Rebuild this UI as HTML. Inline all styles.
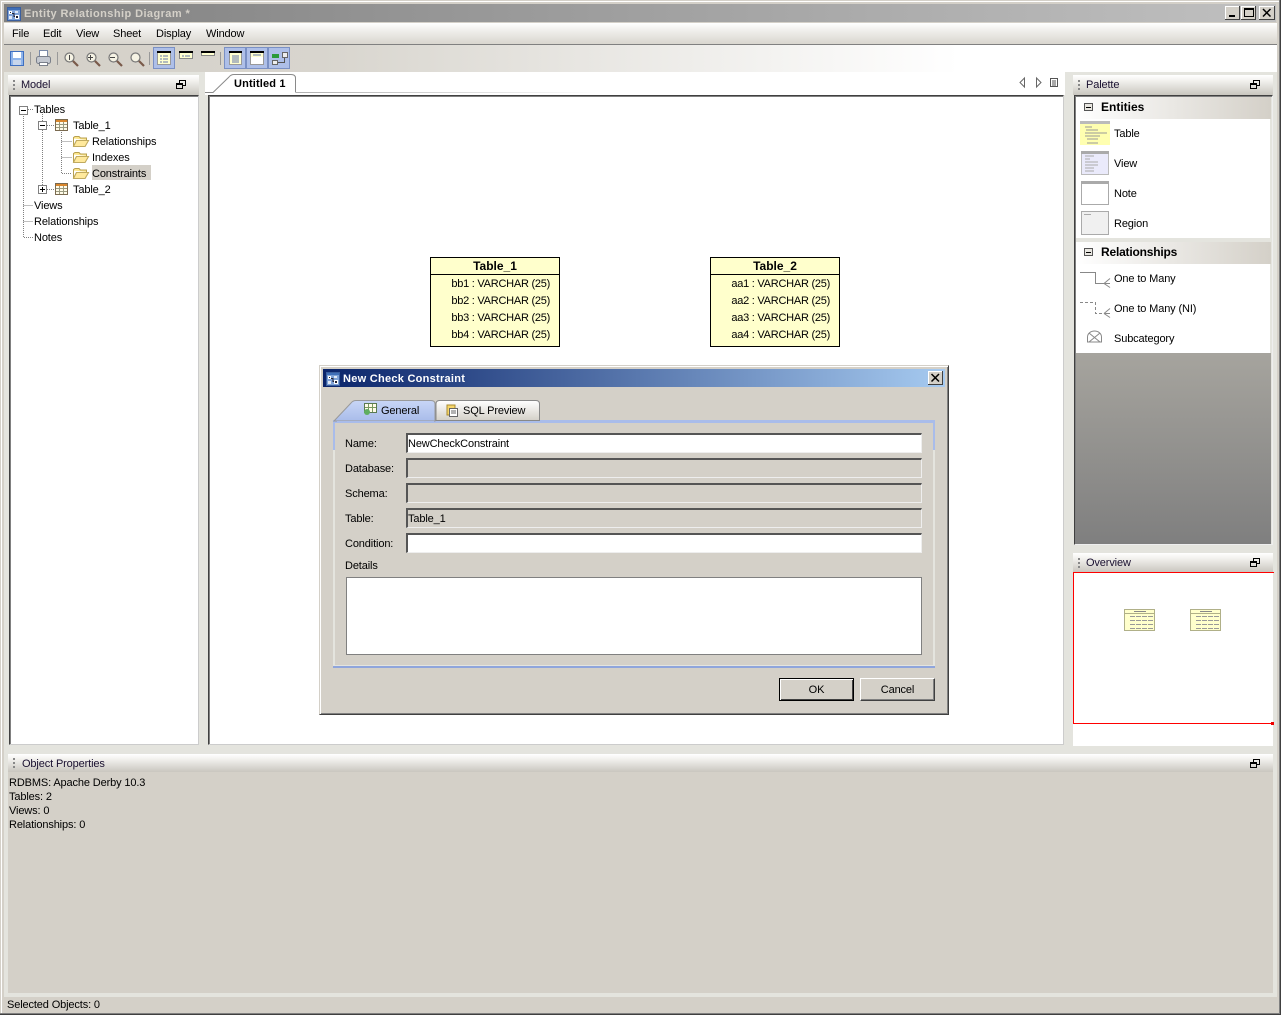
<!DOCTYPE html>
<html><head><meta charset="utf-8"><title>Entity Relationship Diagram</title>
<style>
html,body{margin:0;padding:0}
body{width:1281px;height:1015px;overflow:hidden;background:#d4d0c8;position:relative;font:11px/16px "Liberation Sans",sans-serif;color:#000;letter-spacing:-.13px}
div,span{position:absolute;white-space:nowrap;box-sizing:border-box}
.h{background:linear-gradient(#fff,#f4f3f0 25%,#c9c6bf)}
.in{border-top:2px solid #555;border-left:2px solid #555;border-right:1px solid #eee;border-bottom:1px solid #eee;background:#d4d0c8}
.b{font-weight:bold;letter-spacing:0}
.r{width:128px;text-align:right;letter-spacing:-.25px}
.box{background:#fff;border:1px solid;border-color:#404040 #ccc #ccc #404040;box-shadow:inset 1px 1px 0 #808080}
</style></head><body>
<!-- window frame -->
<div style="left:1px;top:1px;width:1278px;height:1px;background:#fff"></div>
<div style="left:1px;top:1px;width:1px;height:1012px;background:#fff"></div>
<div style="left:1279px;top:0;width:1px;height:1014px;background:#808080"></div>
<div style="left:1280px;top:0;width:1px;height:1015px;background:#404040"></div>
<div style="left:0;top:1013px;width:1280px;height:1px;background:#808080"></div>
<div style="left:0;top:1014px;width:1281px;height:1px;background:#404040"></div>
<!-- title -->
<div style="left:4px;top:4px;width:1272px;height:18px;background:linear-gradient(90deg,#808080,#c0c0c0)"></div>
<span class="b" style="left:24px;top:6px;color:#d4d0c8;letter-spacing:.42px">Entity Relationship Diagram *</span>
<div style="left:4px;top:23px;width:1273px;height:21px;background:linear-gradient(#fff,#f2f1ee 30%,#d9d6cf)"></div>
<div style="left:4px;top:44px;width:1273px;height:1px;background:#808080"></div>
<span style="left:12px;top:26px">File</span><span style="left:43px;top:26px">Edit</span><span style="left:76px;top:26px">View</span><span style="left:113px;top:26px">Sheet</span><span style="left:156px;top:26px">Display</span><span style="left:206px;top:26px">Window</span>
<div style="left:4px;top:45px;width:1273px;height:27px;background:linear-gradient(90deg,#d4d0c8,#d8d5ce 25%,#fff 75%)"></div>
<!-- main bg -->
<div style="left:4px;top:72px;width:1273px;height:925px;background:#e4e4de"></div>
<!-- model -->
<div class="h" style="left:8px;top:75px;width:191px;height:20px"></div>
<span style="left:21px;top:77px;color:#1a1030">Model</span>
<div class="box" style="left:9px;top:95px;width:190px;height:650px"></div>
<div style="left:92px;top:165px;width:59px;height:15px;background:#d4d0c8"></div>
<span style="left:34px;top:102px">Tables</span><span style="left:73px;top:118px">Table_1</span><span style="left:92px;top:134px">Relationships</span><span style="left:92px;top:150px">Indexes</span><span style="left:92px;top:166px">Constraints</span><span style="left:73px;top:182px">Table_2</span><span style="left:34px;top:198px">Views</span><span style="left:34px;top:214px">Relationships</span><span style="left:34px;top:230px">Notes</span>
<!-- editor -->
<div style="left:205px;top:72px;width:860px;height:23px;background:#fff"></div>
<div class="box" style="left:208px;top:95px;width:856px;height:650px"></div>
<!-- diagram tables -->
<div style="left:430px;top:257px;width:130px;height:90px;background:#ffc;border:1px solid #000"></div>
<div style="left:431px;top:274px;width:128px;height:1px;background:#000"></div>
<div class="b" style="left:431px;top:258px;width:128px;text-align:center;font-size:12px">Table_1</div>
<div class="r" style="left:422px;top:276px">bb1 : VARCHAR (25)</div><div class="r" style="left:422px;top:293px">bb2 : VARCHAR (25)</div><div class="r" style="left:422px;top:310px">bb3 : VARCHAR (25)</div><div class="r" style="left:422px;top:327px">bb4 : VARCHAR (25)</div>
<div style="left:710px;top:257px;width:130px;height:90px;background:#ffc;border:1px solid #000"></div>
<div style="left:711px;top:274px;width:128px;height:1px;background:#000"></div>
<div class="b" style="left:711px;top:258px;width:128px;text-align:center;font-size:12px">Table_2</div>
<div class="r" style="left:702px;top:276px">aa1 : VARCHAR (25)</div><div class="r" style="left:702px;top:293px">aa2 : VARCHAR (25)</div><div class="r" style="left:702px;top:310px">aa3 : VARCHAR (25)</div><div class="r" style="left:702px;top:327px">aa4 : VARCHAR (25)</div>
<!-- palette -->
<div class="h" style="left:1073px;top:75px;width:200px;height:20px"></div>
<span style="left:1086px;top:77px;color:#1a1030">Palette</span>
<div style="left:1074px;top:95px;width:199px;height:450px;background:#e4e4de;border:1px solid;border-color:#404040 #eee #eee #404040;box-shadow:inset 1px 1px 0 #808080"></div>
<div style="left:1076px;top:97px;width:195px;height:22px;background:linear-gradient(90deg,#fff,#d4d0c8)"></div>
<span class="b" style="left:1101px;top:99px;font-size:12px">Entities</span>
<div style="left:1076px;top:119px;width:194px;height:119px;background:#fff"></div>
<div style="left:1076px;top:242px;width:195px;height:22px;background:linear-gradient(90deg,#fff,#d4d0c8)"></div>
<span class="b" style="left:1101px;top:244px;font-size:12px;letter-spacing:-.2px">Relationships</span>
<div style="left:1076px;top:264px;width:194px;height:89px;background:#fff"></div>
<div style="left:1076px;top:353px;width:195px;height:191px;background:linear-gradient(#a6a49e,#7f7f7f)"></div>
<span style="left:1114px;top:126px">Table</span><span style="left:1114px;top:156px">View</span><span style="left:1114px;top:186px">Note</span><span style="left:1114px;top:216px">Region</span><span style="left:1114px;top:271px">One to Many</span><span style="left:1114px;top:301px">One to Many (NI)</span><span style="left:1114px;top:331px">Subcategory</span>
<!-- overview -->
<div style="left:1070px;top:550px;width:207px;height:198px;background:#e4e4de"></div>
<div class="h" style="left:1073px;top:553px;width:200px;height:19px"></div>
<span style="left:1086px;top:555px;color:#1a1030">Overview</span>
<div style="left:1073px;top:572px;width:200px;height:174px;background:#fff"></div>
<div style="left:1073px;top:572px;width:201px;height:152px;border:1px solid #f00;border-right:0"></div>
<div style="left:1271px;top:722px;width:3px;height:3px;background:#e00"></div>
<!-- properties -->
<div class="h" style="left:8px;top:754px;width:1265px;height:18px"></div>
<span style="left:22px;top:756px;color:#1a1030">Object Properties</span>
<div style="left:8px;top:772px;width:1265px;height:221px;background:#d4d0c8"></div>
<span style="left:9px;top:775px">RDBMS: Apache Derby 10.3</span><span style="left:9px;top:789px">Tables: 2</span><span style="left:9px;top:803px">Views: 0</span><span style="left:9px;top:817px">Relationships: 0</span>
<div style="left:4px;top:997px;width:1273px;height:16px;background:#d4d0c8"></div>
<span style="left:7px;top:997px">Selected Objects: 0</span>
<!-- dialog -->
<div style="left:319px;top:365px;width:630px;height:350px;background:#d4d0c8;border:1px solid;border-color:#d4d0c8 #404040 #404040 #d4d0c8;box-shadow:inset 1px 1px 0 #fff,inset -1px -1px 0 #808080"></div>
<div style="left:323px;top:369px;width:622px;height:18px;background:linear-gradient(90deg,#0a246a,#a6caf0)"></div>
<span class="b" style="left:343px;top:371px;color:#fff;letter-spacing:.27px">New Check Constraint</span>
<div style="left:333px;top:420px;width:602px;height:248px;background:#d4d0c8;border:2px solid #e4e4de;border-top:0;border-bottom:0"></div>
<div style="left:333px;top:420px;width:602px;height:3px;background:#a9bcea"></div>
<div style="left:333px;top:420px;width:2px;height:30px;background:#a9bcea"></div>
<div style="left:933px;top:420px;width:2px;height:30px;background:#a9bcea"></div>
<div style="left:333px;top:665px;width:602px;height:3px;background:linear-gradient(#e4e4de 33%,#8fa5dc 33%)"></div>
<span style="left:345px;top:436px">Name:</span><span style="left:345px;top:461px">Database:</span><span style="left:345px;top:486px">Schema:</span><span style="left:345px;top:511px">Table:</span><span style="left:345px;top:536px">Condition:</span><span style="left:345px;top:558px">Details</span>
<div class="in" style="left:406px;top:433px;width:516px;height:20px;background:#fff"></div>
<div class="in" style="left:406px;top:458px;width:516px;height:20px"></div>
<div class="in" style="left:406px;top:483px;width:516px;height:20px"></div>
<div class="in" style="left:406px;top:508px;width:516px;height:20px"></div>
<div class="in" style="left:406px;top:533px;width:516px;height:20px;background:#fff"></div>
<span style="left:408px;top:436px">NewCheckConstraint</span><span style="left:408px;top:511px">Table_1</span>
<div style="left:346px;top:577px;width:576px;height:78px;background:#fff;border:1px solid #808080"></div>
<div style="left:779px;top:678px;width:75px;height:23px;background:#d4d0c8;border:1px solid #000;box-shadow:inset 1px 1px 0 #fff,inset -1px -1px 0 #404040;text-align:center;line-height:22px">OK</div>
<div style="left:860px;top:678px;width:75px;height:23px;background:#d4d0c8;border-top:1px solid #fff;border-left:1px solid #fff;border-right:1px solid #404040;border-bottom:1px solid #404040;box-shadow:inset -1px -1px 0 #808080;text-align:center;line-height:22px">Cancel</div>
<!-- icons -->
<svg width="1281" height="1015" style="position:absolute;left:0;top:0" xmlns="http://www.w3.org/2000/svg">
<defs>
<g id="logo" shape-rendering="crispEdges"><rect x=".5" y=".5" width="13" height="13" fill="#7fa3d8" stroke="#3a5f9f"/><rect x="1" y="1" width="12" height="2" fill="#3f6fb8"/><rect x="2" y="4" width="3" height="3" fill="#fff"/><rect x="8" y="8" width="4" height="4" fill="#fff"/><rect x="3" y="5" width="1" height="1" fill="#223"/><rect x="9" y="9" width="2" height="2" fill="#223"/><rect x="2" y="9" width="3" height="3" fill="#dfe8f6"/><rect x="8" y="4" width="3" height="2" fill="#dfe8f6"/><path d="M5 6.500H7V9.500H8" stroke="#223" fill="none"/></g>
<g id="folder"><path d="M.5 3.500V2.500L2 1.500H6L7.500 3H13.500V5M.5 3.500V11.500H12L15.500 5.500H3.500L.5 11" fill="#fde68a" stroke="#b8a050"/><path d="M3.500 5.500H15.500L12 11.500H.5Z" fill="#ffe99c" stroke="#c0aa60"/></g>
<g id="tbl" shape-rendering="crispEdges"><rect x=".5" y=".5" width="12" height="11" fill="#fffbe8" stroke="#7a6a50"/><rect x="1" y="1" width="11" height="2" fill="#d9862c"/><path d="M4.500 3V11M8.500 3V11M1 5.500H12M1 8.500H12" stroke="#9a9a80"/></g>
<g id="restore" fill="none" stroke="#000" shape-rendering="crispEdges"><path d="M3.500 3V.5H9.500V5.500H7"/><rect x=".5" y="3.500" width="6" height="5"/><path d="M1 4.500H6"/></g>
<g id="grip" fill="#888" shape-rendering="crispEdges"><rect width="2" height="2"/><rect y="4" width="2" height="2"/><rect y="8" width="2" height="2"/></g>
<g id="mag"><circle cx="5.500" cy="5.500" r="4.500" fill="#f6f3e4" stroke="#777" stroke-width="1.200"/><path d="M9 9L14 14" stroke="#7a5a4a" stroke-width="2.200"/></g>
<g id="pm" shape-rendering="crispEdges"><rect x=".5" y=".5" width="8" height="8" fill="#fff" stroke="#808080"/><path d="M2 4.500H7" stroke="#000"/></g>
</defs>
<use href="#logo" x="7" y="7"/>
<!-- window buttons -->
<g shape-rendering="crispEdges">
<rect x="1225" y="6" width="15" height="14" fill="#d4d0c8"/><path d="M1225 6.500H1240M1225.500 6V20" stroke="#fff"/><path d="M1225 19.500H1240M1239.500 6V20" stroke="#404040"/><rect x="1229" y="15" width="6" height="2" fill="#000"/>
<rect x="1241" y="6" width="15" height="14" fill="#d4d0c8"/><path d="M1241 6.500H1256M1241.500 6V20" stroke="#fff"/><path d="M1241 19.500H1256M1255.500 6V20" stroke="#404040"/><rect x="1244.500" y="8.500" width="9" height="8" fill="none" stroke="#000"/><path d="M1244 9.500H1254" stroke="#000"/>
<rect x="1259" y="6" width="16" height="14" fill="#d4d0c8"/><path d="M1259 6.500H1275M1259.500 6V20" stroke="#fff"/><path d="M1259 19.500H1275M1274.500 6V20" stroke="#404040"/>
</g>
<path d="M1263 9L1270.500 16.500M1270.500 9L1263 16.500" stroke="#000" stroke-width="1.500"/>
<!-- toolbar -->
<g shape-rendering="crispEdges"><rect x="10.500" y="51.500" width="13" height="14" fill="#8fb4ea" stroke="#3f6fc0"/><rect x="13" y="52" width="8" height="6" fill="#fff"/><rect x="13" y="60" width="8" height="5" fill="#c8d6ec"/>
<path d="M30.500 52V65M57.500 52V65M149.500 52V65M220.500 52V65" stroke="#999"/>
<rect x="39.500" y="50.500" width="8" height="7" fill="#fff" stroke="#7a8aa8"/></g><rect x="36.500" y="56.500" width="14" height="7" rx="2" fill="#c4c8d0" stroke="#7a7f8a"/><rect x="39.500" y="62.500" width="8" height="3" fill="#fff" stroke="#7a7f8a"/>
<use href="#mag" x="64" y="52"/><use href="#mag" x="86" y="52"/><use href="#mag" x="108" y="52"/><use href="#mag" x="130" y="52"/>
<path d="M69.500 55V60M88 57.500H93M90.500 55V60M110 57.500H115" stroke="#444" fill="none"/>
<g shape-rendering="crispEdges">
<rect x="153.500" y="47.500" width="21" height="21" fill="#aebfe8" stroke="#7a90c4"/>
<rect x="224.500" y="47.500" width="21" height="21" fill="#aebfe8" stroke="#7a90c4"/>
<rect x="246.500" y="47.500" width="21" height="21" fill="#aebfe8" stroke="#7a90c4"/>
<rect x="268.500" y="47.500" width="21" height="21" fill="#aebfe8" stroke="#7a90c4"/>
<rect x="157.500" y="51.500" width="13" height="13" fill="#ffffd0" stroke="#999"/><rect x="157" y="51" width="14" height="2" fill="#000"/><path d="M160 56H162M163 56H168M160 59H162M163 59H168M160 62H162M163 62H168" stroke="#67a"/>
<rect x="179.500" y="51.500" width="13" height="7" fill="#ffffd0" stroke="#888"/><rect x="179" y="51" width="14" height="2" fill="#000"/><path d="M182 56H184M185 56H190" stroke="#67a"/>
<rect x="201.500" y="51.500" width="13" height="4" fill="#ffffd0" stroke="#888"/><rect x="201" y="51" width="14" height="2" fill="#000"/>
<rect x="229.500" y="51.500" width="12" height="13" fill="#ffffd0" stroke="#999"/><rect x="229" y="51" width="13" height="2" fill="#000"/><path d="M232 56H239M232 58H239M232 60H239M232 62H239" stroke="#67a"/>
<rect x="250.500" y="51.500" width="13" height="13" fill="#fff" stroke="#999"/><rect x="250" y="51" width="14" height="2" fill="#000"/><rect x="251" y="53" width="12" height="4" fill="#ffffd0"/><path d="M253 55H261" stroke="#67a"/>
<rect x="272" y="54" width="7" height="4" fill="#2a9a3a"/><rect x="282.500" y="52.500" width="5" height="5" fill="#eee" stroke="#666"/><rect x="272.500" y="60.500" width="5" height="4" fill="#eee" stroke="#666"/><path d="M284.500 58V62.500H278" stroke="#555" fill="none"/>
<!-- grips and restore -->
<use href="#grip" x="13" y="80"/><use href="#grip" x="1078" y="80"/><use href="#grip" x="1078" y="558"/><use href="#grip" x="13" y="758"/>
<use href="#restore" x="176" y="80"/><use href="#restore" x="1250" y="80"/><use href="#restore" x="1250" y="558"/><use href="#restore" x="1250" y="759"/>
</g>
<!-- tree lines -->
<path d="M23.500 114V237.500H33M23.500 205.500H33M23.500 221.500H33M28 109.500H33M42.500 114V185M47 125.500H54M47 189.500H54M61.500 130V173.500H72M61.500 141.500H72M61.500 157.500H72" fill="none" stroke="#808080" stroke-dasharray="1 1" shape-rendering="crispEdges"/>
<use href="#pm" x="19" y="106"/><use href="#pm" x="38" y="121"/><use href="#pm" x="38" y="185"/>
<path d="M42.500 187V192" stroke="#000" shape-rendering="crispEdges"/>
<use href="#tbl" x="55" y="119"/><use href="#tbl" x="55" y="183"/>
<use href="#folder" x="73" y="135"/><use href="#folder" x="73" y="151"/><use href="#folder" x="73" y="167"/>
<!-- tab outline -->
<defs><linearGradient id="fd" x1="0" x2="1" y1="0" y2="0"><stop offset="0" stop-color="#b0b0b0"/><stop offset="1" stop-color="#fff"/></linearGradient></defs>
<path d="M205 92.500H213L229 77Q231 74.500 234 74.500H291Q295.500 74.500 295.500 78V92.500" fill="#fff" stroke="#8a8a8a"/>
<rect x="296" y="92" width="300" height="1" fill="url(#fd)"/>
<path d="M1024.500 78V87L1020 82.500ZM1036.500 78V87L1041 82.500Z" fill="#fff" stroke="#666"/>
<path d="M1050.500 78.500H1057.500V86.500H1050.500ZM1052 81H1056M1052 83H1056M1052 85H1056" fill="#fff" stroke="#555" shape-rendering="crispEdges"/>
<!-- palette icons -->
<g shape-rendering="crispEdges">
<rect x="1084.500" y="103.500" width="8" height="7" fill="#e8e6e0" stroke="#555"/><path d="M1086 107.500H1091" stroke="#000"/>
<rect x="1084.500" y="248.500" width="8" height="7" fill="#e8e6e0" stroke="#555"/><path d="M1086 252.500H1091" stroke="#000"/>
<rect x="1080" y="121" width="30" height="24" fill="#ffffb0"/><rect x="1080" y="121" width="30" height="3" fill="#bbb"/><path d="M1085 127H1092M1086 130H1098M1085 133H1107M1085 136H1100M1087 139H1098M1087 143H1098" stroke="#999"/>
<rect x="1081.500" y="151.500" width="27" height="23" fill="#eaeafb" stroke="#bbb"/><rect x="1081" y="151" width="28" height="3" fill="#aaa"/><path d="M1085 156H1094M1085 159H1090M1085 162H1098M1085 165H1098M1085 168H1094M1085 171H1094" stroke="#aaa"/>
<rect x="1081.500" y="181.500" width="27" height="23" fill="#fff" stroke="#aaa"/><rect x="1081" y="181" width="28" height="3" fill="#aaa"/>
<rect x="1081.500" y="211.500" width="27" height="23" fill="#f0f0f0" stroke="#aaa"/><path d="M1084 214.500H1091" stroke="#aaa"/>
<path d="M1080 272.500H1095.500V283.500H1104" fill="none" stroke="#888"/>
<path d="M1080 302.500H1095.500V313.500H1104" fill="none" stroke="#888" stroke-dasharray="3 2"/>
</g>
<path d="M1104 283.500L1110 278.500M1104 283.500H1110M1104 283.500L1110 287.500M1104 313.500L1110 308.500M1104 313.500H1110M1104 313.500L1110 317.500" stroke="#888" fill="none"/>
<path d="M1087.500 342V337A7 6 0 0 1 1101.500 337V342ZM1089 333L1100 342M1100 333L1089 342" fill="none" stroke="#888"/>
<!-- overview tables -->
<g shape-rendering="crispEdges">
<rect x="1124.500" y="609.500" width="30" height="21" fill="#ffc" stroke="#b0b088"/><rect x="1190.500" y="609.500" width="30" height="21" fill="#ffc" stroke="#b0b088"/>
<path d="M1125 613.500H1154M1191 613.500H1220" stroke="#b0b088"/>
<path d="M1134 611.500H1146M1200 611.500H1212" stroke="#888"/>
<path d="M1130 616.500H1153M1130 620.500H1153M1130 624.500H1153M1130 628.500H1153M1196 616.500H1219M1196 620.500H1219M1196 624.500H1219M1196 628.500H1219" stroke="#999" stroke-dasharray="5 1"/>
</g>
<!-- dialog -->
<use href="#logo" x="326" y="372"/>
<g shape-rendering="crispEdges">
<rect x="928" y="371" width="15" height="14" fill="#d4d0c8"/><path d="M928 371.500H943M928.500 371V385" stroke="#fff"/><path d="M928 384.500H943M942.500 371V385" stroke="#404040"/>
</g>
<path d="M931.500 374L939 381.500M939 374L931.500 381.500" stroke="#000" stroke-width="1.500"/>
<defs><linearGradient id="gt" x1="0" y1="0" x2="0" y2="1"><stop offset="0" stop-color="#c8d6f6"/><stop offset="1" stop-color="#a9bcea"/></linearGradient><linearGradient id="st" x1="0" y1="0" x2="0" y2="1"><stop offset="0" stop-color="#fff"/><stop offset="1" stop-color="#d4d0c8"/></linearGradient></defs>
<path d="M436 420.500V404Q436 400.500 439.500 400.500H536Q539.500 400.500 539.500 404V420.500Z" fill="url(#st)" stroke="#888"/>
<path d="M334 421L351 403Q353 400.500 356 400.500H431Q435 400.500 435 404V421Z" fill="url(#gt)" stroke="#999"/>
<path d="M337 421H434V423H337Z" fill="#a9bcea"/>
<g shape-rendering="crispEdges"><rect x="364.500" y="403.500" width="12" height="9" fill="#fffbe8" stroke="#5a7a50"/><path d="M368.500 404V412M372.500 404V412M365 407.500H376" stroke="#7a9a60"/></g>
<circle cx="367" cy="412" r="3" fill="#5fae5f"/>
<path d="M447 405H455V415H447Z" fill="#f6d66a" stroke="#a88a30"/><rect x="449.500" y="408.500" width="8" height="8" fill="#fff" stroke="#666"/><path d="M451 411H456M451 413H456" stroke="#666"/>
</svg>
<span class="b" style="left:234px;top:76px;letter-spacing:.15px">Untitled 1</span>
<span style="left:381px;top:403px">General</span><span style="left:463px;top:403px">SQL Preview</span>
</body></html>
